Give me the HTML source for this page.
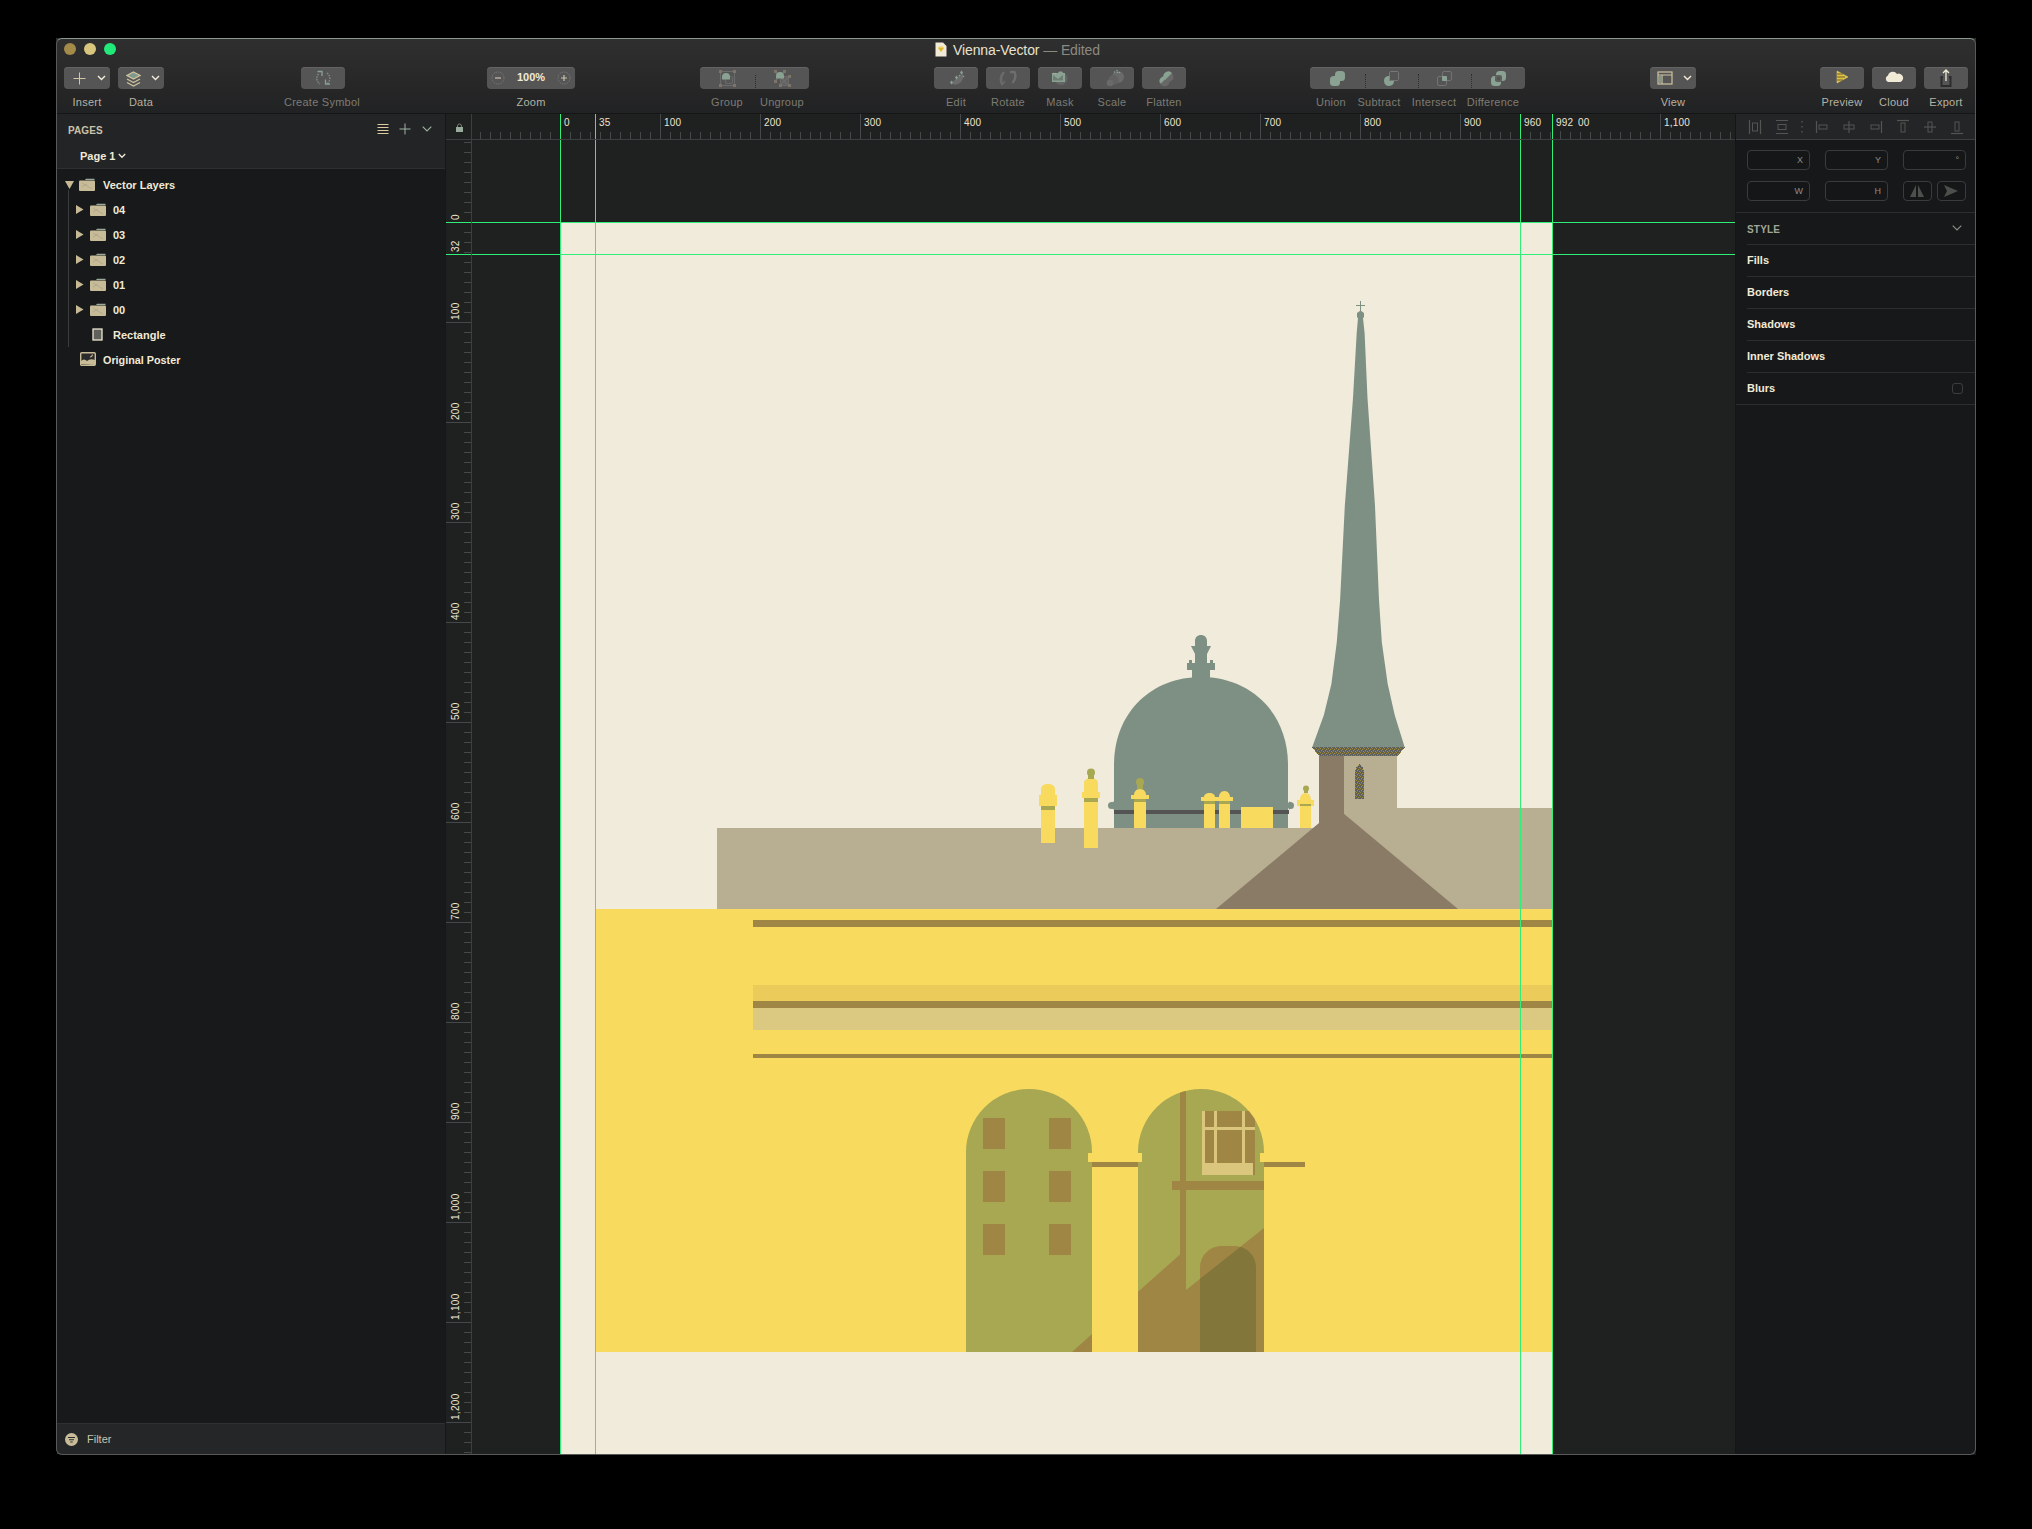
<!DOCTYPE html>
<html><head><meta charset="utf-8">
<style>
*{margin:0;padding:0;box-sizing:border-box}
html,body{width:2032px;height:1529px;overflow:hidden;background:#000}
body{position:relative;font-family:"Liberation Sans",sans-serif;color:#f1ead7}
.a{position:absolute}
.t{position:absolute;white-space:nowrap;line-height:1}
.win{left:56px;top:38px;width:1920px;height:1417px;border-radius:6px;background:#1b1c1e;overflow:hidden}
.tb{left:56px;top:38px;width:1920px;height:76px;background:linear-gradient(#2f2f2f,#2b2b2b 35%,#262627 70%,#212223);border-bottom:1px solid #151516}
.btn{position:absolute;top:67px;height:22px;border-radius:4px;background:#555555;box-shadow:inset 0 1px 0 #636363}
.lbl{position:absolute;top:97px;font-size:11px;letter-spacing:0.25px;color:#b5b2a4;white-space:nowrap;line-height:1;transform:translateX(-50%)}
.lbl.dim{color:#7d7c74}
.lay{position:absolute;font-size:11px;font-weight:700;color:#f1ead7;white-space:nowrap;line-height:1}
.sec{position:absolute;left:1747px;font-size:11px;font-weight:700;color:#f1ead7;line-height:1}
.div{position:absolute;left:1747px;width:229px;height:1px;background:#2c2d2e}
.fld{position:absolute;height:20px;border:1px solid #3a3b3b;border-radius:4px;background:#151618}
.fl{position:absolute;right:6px;top:5px;font-size:9px;color:#8e8d85;line-height:1}
.rl{position:absolute;font-size:10px;letter-spacing:0.2px;color:#ece5d2;line-height:1;white-space:nowrap}
.vr{position:absolute;font-size:10px;letter-spacing:0.3px;color:#ece5d2;line-height:1;white-space:nowrap;transform-origin:0 0;transform:rotate(-90deg)}
</style></head><body>
<!-- window -->
<div class="a win"></div>
<div class="a tb"></div>
<!-- window border -->
<div class="a" style="left:56px;top:38px;width:1920px;height:1417px;border:1px solid #595959;border-top-color:#8c9a8c;border-radius:6px;pointer-events:none;z-index:50"></div>

<!-- traffic lights -->
<div class="a" style="left:64px;top:43px;width:12px;height:12px;border-radius:6px;background:#a38a48"></div>
<div class="a" style="left:84px;top:43px;width:12px;height:12px;border-radius:6px;background:#d8c67e"></div>
<div class="a" style="left:104px;top:43px;width:12px;height:12px;border-radius:6px;background:#22ea7a"></div>

<!-- title -->
<svg class="a" style="left:935px;top:42px" width="12" height="15" viewBox="0 0 12 15"><path d="M0.5,0.5 H8 L11.5,4 V14.5 H0.5 Z" fill="#f1ead7"/><path d="M3,6 H9 L6,10 Z" fill="#e0b830"/><path d="M3,6 L4,4.5 H8 L9,6" fill="#f0d060"/></svg>
<div class="t" style="left:953px;top:43px;font-size:14px;color:#e8e2cf;letter-spacing:-0.1px">Vienna-Vector <span style="color:#8c8a80">— Edited</span></div>

<div id="toolbar"><div class="btn" style="left:64px;width:46px;"></div>
<svg class="a" style="left:73px;top:72px" width="13" height="13" viewBox="0 0 13 13"><path d="M6.5,0.5 V12.5 M0.5,6.5 H12.5" stroke="#d3c7a0" stroke-width="1"/></svg>
<svg class="a" style="left:97px;top:75px" width="9" height="6" viewBox="0 0 9 6"><path d="M1,1 L4.5,4.5 L8,1" fill="none" stroke="#f2ecd9" stroke-width="1.4"/></svg>
<div class="lbl" style="left:87px">Insert</div>
<div class="btn" style="left:118px;width:46px;"></div>
<svg class="a" style="left:126px;top:71px" width="15" height="16" viewBox="0 0 15 16"><path d="M7.5,1 L14,4.5 L7.5,8 L1,4.5 Z" fill="#7f9a8c" stroke="#cfc3a0" stroke-width="1.2"/><path d="M1,8 L7.5,11.5 L14,8 M1,11.5 L7.5,15 L14,11.5" fill="none" stroke="#cfc3a0" stroke-width="1.2"/></svg>
<svg class="a" style="left:151px;top:75px" width="9" height="6" viewBox="0 0 9 6"><path d="M1,1 L4.5,4.5 L8,1" fill="none" stroke="#f2ecd9" stroke-width="1.4"/></svg>
<div class="lbl" style="left:141px">Data</div>
<div class="btn" style="left:301px;width:44px;"></div>
<div class="lbl dim" style="left:322px">Create Symbol</div>
<div class="btn" style="left:487px;width:88px;"></div>
<svg class="a" style="left:491px;top:71px" width="14" height="14" viewBox="0 0 14 14"><circle cx="7" cy="7" r="6" fill="none" stroke="#777" stroke-width="1" stroke-dasharray="1.5 1"/><path d="M4,7 H10" stroke="#c8c2ab" stroke-width="1.2"/></svg>
<svg class="a" style="left:557px;top:71px" width="14" height="14" viewBox="0 0 14 14"><circle cx="7" cy="7" r="6" fill="none" stroke="#777" stroke-width="1" stroke-dasharray="1.5 1"/><path d="M4,7 H10 M7,4 V10" stroke="#c8c2ab" stroke-width="1.2"/></svg>
<div class="t" style="left:517px;top:72px;font-size:11px;font-weight:700;color:#f1ead7">100%</div>
<div class="lbl" style="left:531px">Zoom</div>
<div class="btn" style="left:700px;width:109px;"></div>
<div class="a" style="left:755px;top:75px;width:1px;height:13px;border-left:1px dotted #2a2a2a"></div>
<div class="lbl dim" style="left:727px">Group</div>
<div class="lbl dim" style="left:782px">Ungroup</div>
<div class="btn" style="left:934px;width:44px;"></div>
<div class="lbl dim" style="left:956px">Edit</div>
<div class="btn" style="left:986px;width:44px;"></div>
<div class="lbl dim" style="left:1008px">Rotate</div>
<div class="btn" style="left:1038px;width:44px;"></div>
<div class="lbl dim" style="left:1060px">Mask</div>
<div class="btn" style="left:1090px;width:44px;"></div>
<div class="lbl dim" style="left:1112px">Scale</div>
<div class="btn" style="left:1142px;width:44px;"></div>
<div class="lbl dim" style="left:1164px">Flatten</div>
<div class="btn" style="left:1310px;width:215px;"></div>
<div class="a" style="left:1365px;top:74px;width:1px;height:14px;border-left:1px dotted #2e2e2e"></div>
<div class="a" style="left:1418px;top:74px;width:1px;height:14px;border-left:1px dotted #2e2e2e"></div>
<div class="a" style="left:1471px;top:74px;width:1px;height:14px;border-left:1px dotted #2e2e2e"></div>
<div class="lbl dim" style="left:1331px">Union</div>
<div class="lbl dim" style="left:1379px">Subtract</div>
<div class="lbl dim" style="left:1434px">Intersect</div>
<div class="lbl dim" style="left:1493px">Difference</div>
<div class="btn" style="left:1650px;width:46px;"></div>
<svg class="a" style="left:1657px;top:71px" width="16" height="14" viewBox="0 0 16 14"><rect x="1" y="1" width="14" height="12" fill="none" stroke="#cfc3a0" stroke-width="1.2"/><path d="M1,4 H15 M5,4 V13" stroke="#cfc3a0" stroke-width="1.2"/><rect x="2" y="5" width="3" height="7" fill="#7f9a8c"/></svg>
<svg class="a" style="left:1683px;top:75px" width="9" height="6" viewBox="0 0 9 6"><path d="M1,1 L4.5,4.5 L8,1" fill="none" stroke="#f2ecd9" stroke-width="1.4"/></svg>
<div class="lbl" style="left:1673px">View</div>
<div class="btn" style="left:1820px;width:44px;"></div>
<svg class="a" style="left:1834px;top:69px" width="16" height="16" viewBox="0 0 16 16"><path d="M3,2 L14,8 L3,14 Z" fill="#e0c040" stroke="#f0d860" stroke-width="0.5"/><path d="M3,5 H9 M3,8 H11 M3,11 H9" stroke="#6a6030" stroke-width="1"/></svg>
<div class="lbl" style="left:1842px">Preview</div>
<div class="btn" style="left:1872px;width:44px;"></div>
<svg class="a" style="left:1884px;top:71px" width="20" height="12" viewBox="0 0 20 12"><path d="M4,11 A3.5,3.5 0 0 1 4,4.5 A5,5 0 0 1 13,3 A4,4 0 0 1 16.5,11 Z" fill="#f1ead7"/></svg>
<div class="lbl" style="left:1894px">Cloud</div>
<div class="btn" style="left:1924px;width:44px;"></div>
<svg class="a" style="left:1938px;top:68px" width="16" height="20" viewBox="0 0 16 20"><path d="M5,9 H3.5 V18 H12.5 V9 H11" fill="none" stroke="#2c2c2c" stroke-width="2"/><path d="M8,13 V2 M5,5 L8,2 L11,5" fill="none" stroke="#f1ead7" stroke-width="1.3"/></svg>
<div class="lbl" style="left:1946px">Export</div></div>
<svg class="a" style="left:0;top:0" width="2032" height="120" viewBox="0 0 2032 120">
<!-- create symbol -->
<path d="M318.5,74 A6.5,6.5 0 0 0 320,84" fill="none" stroke="#7d8d82" stroke-width="1.4" stroke-dasharray="1.6 1"/>
<path d="M327,73 A6.5,6.5 0 0 1 326.5,84" fill="none" stroke="#7d8d82" stroke-width="1.4" stroke-dasharray="1.6 1"/>
<path d="M317.5,71.5 H322 V76" fill="none" stroke="#8aa292" stroke-width="1.3"/>
<path d="M330,84 H325.5 V79.5" fill="none" stroke="#8aa292" stroke-width="1.3"/>
<!-- group -->
<rect x="720.5" y="71.5" width="14" height="14" fill="none" stroke="#6c6c6c" stroke-width="1"/>
<g fill="#7c7468"><rect x="719" y="70" width="3" height="3"/><rect x="733" y="70" width="3" height="3"/><rect x="719" y="84" width="3" height="3"/><rect x="733" y="84" width="3" height="3"/></g>
<rect x="725.5" y="76.5" width="7" height="7" rx="2" fill="none" stroke="#686868" stroke-width="1.2"/>
<path d="M722,80 V77 A4,4 0 0 1 730,77 V80 L729,79 L728,80 L727,79 L726,80 L725,79 L724,80 L723,79 Z" fill="#8aa292"/>
<!-- ungroup -->
<rect x="780.5" y="76.5" width="8" height="9" rx="2.5" fill="#616161" stroke="#6c6c6c"/>
<path d="M775.5,72 L789,86 M784,72 L775,81 M789,76.5 L780,85.5" stroke="#6c6c6c" stroke-width="1.6"/>
<path d="M776,79 V76 A4,4 0 0 1 784,76 V79 L783,78 L782,79 L781,78 L780,79 L779,78 L778,79 L777,78 Z" fill="#8aa292"/>
<g fill="#7c7468"><rect x="774" y="70" width="3" height="3"/><rect x="783" y="70" width="3" height="3"/><rect x="774" y="80" width="3" height="3"/><rect x="788" y="75" width="3" height="3"/><rect x="779" y="84" width="3" height="3"/><rect x="788" y="84" width="3" height="3"/></g>
<!-- edit -->
<path d="M951,83 Q956,87 961,82 Q965,77 962.5,73 Z" fill="#6c6c6c"/>
<g fill="#8aa292"><path d="M951.5,80.5 L953,82.5 L951.5,84.5 L950,82.5Z"/><path d="M956.5,75.5 L958,77.5 L956.5,79.5 L955,77.5Z"/><path d="M961.5,70.5 L963,72.5 L961.5,74.5 L960,72.5Z"/><circle cx="959.5" cy="75.5" r="0.8"/><circle cx="963.5" cy="76.5" r="0.8"/></g>
<!-- rotate -->
<path d="M1004,72 Q999,78 1002,84" fill="none" stroke="#6a6a6a" stroke-width="2.6"/>
<path d="M1002,85 L1001,81 M1002,85 L1005,81" stroke="#6a6a6a" stroke-width="1.3"/>
<path d="M1010,72 H1014.5 Q1017,78 1012.5,83" fill="none" stroke="#6e6e6e" stroke-width="2.4"/>
<!-- mask -->
<circle cx="1061" cy="78.5" r="6.5" fill="#656565"/>
<path d="M1052,73 H1058 L1059,71.5 H1062 L1063,73 H1065 V82 H1052 Z" fill="#8aa292"/>
<path d="M1053,75 L1058,79 L1063,75 V80.5 H1053 Z" fill="#6f7d73"/>
<circle cx="1053.5" cy="73.5" r="0.7" fill="#c8a880"/><circle cx="1055.5" cy="73.5" r="0.7" fill="#c8a880"/>
<!-- scale -->
<circle cx="1118" cy="77" r="6" fill="#6a6a6a"/>
<circle cx="1113.5" cy="80" r="5" fill="#626262"/>
<circle cx="1110" cy="83" r="3.3" fill="#6a6a6a"/>
<g fill="#8aa292"><circle cx="1114.5" cy="72" r="0.8"/><circle cx="1117" cy="70.5" r="0.8"/><circle cx="1117.5" cy="72.5" r="0.8"/><circle cx="1119.5" cy="72.5" r="0.8"/></g>
<!-- flatten -->
<circle cx="1164.5" cy="81.5" r="5" fill="#686868"/>
<circle cx="1168.5" cy="77" r="5" fill="#686868"/>
<path d="M1159.5,82 A5,5 0 0 1 1167,77 L1161,83.5 Z" fill="#8aa292"/>
<path d="M1163.5,77.5 A5,5 0 0 1 1172,73 L1165,80 Z" fill="#8aa292"/>
<path d="M1160.5,83 L1169,74.5" stroke="#8a9a8e" stroke-width="1" stroke-dasharray="1 1.2"/>
<!-- union -->
<g fill="#8aa292"><rect x="1330" y="76" width="10" height="10" rx="3.5"/><rect x="1335" y="71" width="10" height="10" rx="3.5"/></g>
<!-- subtract -->
<rect x="1389.5" y="71.5" width="9" height="9" rx="1" fill="none" stroke="#777" stroke-width="1"/>
<path d="M1388,76 A5,5 0 1 0 1394,81.5 L1394,81 L1389.5,81 L1389.5,76 Z" fill="#8aa292"/>
<!-- intersect -->
<rect x="1437.5" y="76.5" width="9" height="9" rx="1.5" fill="none" stroke="#737373" stroke-width="1"/>
<rect x="1442.5" y="71.5" width="9" height="9" rx="1.5" fill="none" stroke="#737373" stroke-width="1"/>
<rect x="1442" y="76" width="5" height="5" rx="1" fill="#8aa292"/>
<!-- difference -->
<g fill="#8aa292"><rect x="1491" y="76" width="10" height="10" rx="3.5"/><rect x="1496" y="71" width="10" height="10" rx="3.5"/></g>
<rect x="1495" y="75" width="7" height="7" rx="2" fill="#5f5f5f"/>
<rect x="1497" y="77" width="3" height="3" fill="#545454"/>
</svg>
<div id="left"><div class="a" style="left:57px;top:114px;width:388px;height:54px;background:#232426"></div>
<div class="a" style="left:57px;top:168px;width:388px;height:1px;background:#2e2f31"></div>
<div class="a" style="left:57px;top:169px;width:388px;height:1254px;background:#18191b"></div>
<div class="a" style="left:57px;top:1423px;width:388px;height:31px;background:#252627;border-top:1px solid #2f3031"></div>
<div class="a" style="left:445px;top:114px;width:1px;height:1341px;background:#161718"></div>
<div class="t" style="left:68px;top:125.5px;font-size:10px;font-weight:700;color:#c9c2a9;letter-spacing:0.1px">PAGES</div>
<svg class="a" style="left:377px;top:123px" width="12" height="12" viewBox="0 0 12 12"><path d="M0.5,1.5 H11.5 M0.5,4.5 H11.5 M0.5,7.5 H11.5 M0.5,10.5 H11.5" stroke="#dccca0" stroke-width="1"/></svg>
<svg class="a" style="left:399px;top:123px" width="12" height="12" viewBox="0 0 12 12"><path d="M6,0.5 V11.5 M0.5,6 H11.5" stroke="#9fb3a3" stroke-width="1"/></svg>
<svg class="a" style="left:422px;top:126px" width="10" height="7" viewBox="0 0 10 7"><path d="M0.7,0.7 L5,5 L9.3,0.7" fill="none" stroke="#9fb3a3" stroke-width="1.1"/></svg>
<div class="t" style="left:80px;top:151px;font-size:11px;font-weight:700;color:#f1ead7">Page 1</div>
<svg class="a" style="left:118px;top:153px" width="8" height="6" viewBox="0 0 8 6"><path d="M0.8,1 L4,4.3 L7.2,1" fill="none" stroke="#f1ead7" stroke-width="1.3"/></svg>
<svg class="a" style="left:65px;top:181px" width="9" height="8" viewBox="0 0 9 8"><path d="M0,0 H9 L4.5,8Z" fill="#c6b994"/></svg>
<svg class="a" style="left:79px;top:178px" width="16" height="13" viewBox="0 0 16 13"><path d="M0.5,2 H6 L7,0.8 H15.5 V2 Z" fill="#9aab9d"/><rect x="0" y="2.5" width="16" height="10.5" rx="1" fill="#c8bc98"/><path d="M3,5 L13,11 M3,9 L8,6" stroke="#a9a48a" stroke-width="0.8"/></svg>
<div class="lay" style="left:103px;top:180px">Vector Layers</div>
<div class="a" style="left:68px;top:190px;width:1px;height:157px;background:#3b3c3c"></div>
<svg class="a" style="left:76px;top:205px" width="8" height="9" viewBox="0 0 8 9"><path d="M0,0 L7.5,4.5 L0,9Z" fill="#c6b994"/></svg>
<svg class="a" style="left:90px;top:203px" width="16" height="13" viewBox="0 0 16 13"><path d="M0.5,2 H6 L7,0.8 H15.5 V2 Z" fill="#9aab9d"/><rect x="0" y="2.5" width="16" height="10.5" rx="1" fill="#c8bc98"/><path d="M3,5 L13,11 M3,9 L8,6" stroke="#a9a48a" stroke-width="0.8"/></svg>
<div class="lay" style="left:113px;top:205px">04</div>
<svg class="a" style="left:76px;top:230px" width="8" height="9" viewBox="0 0 8 9"><path d="M0,0 L7.5,4.5 L0,9Z" fill="#c6b994"/></svg>
<svg class="a" style="left:90px;top:228px" width="16" height="13" viewBox="0 0 16 13"><path d="M0.5,2 H6 L7,0.8 H15.5 V2 Z" fill="#9aab9d"/><rect x="0" y="2.5" width="16" height="10.5" rx="1" fill="#c8bc98"/><path d="M3,5 L13,11 M3,9 L8,6" stroke="#a9a48a" stroke-width="0.8"/></svg>
<div class="lay" style="left:113px;top:230px">03</div>
<svg class="a" style="left:76px;top:255px" width="8" height="9" viewBox="0 0 8 9"><path d="M0,0 L7.5,4.5 L0,9Z" fill="#c6b994"/></svg>
<svg class="a" style="left:90px;top:253px" width="16" height="13" viewBox="0 0 16 13"><path d="M0.5,2 H6 L7,0.8 H15.5 V2 Z" fill="#9aab9d"/><rect x="0" y="2.5" width="16" height="10.5" rx="1" fill="#c8bc98"/><path d="M3,5 L13,11 M3,9 L8,6" stroke="#a9a48a" stroke-width="0.8"/></svg>
<div class="lay" style="left:113px;top:255px">02</div>
<svg class="a" style="left:76px;top:280px" width="8" height="9" viewBox="0 0 8 9"><path d="M0,0 L7.5,4.5 L0,9Z" fill="#c6b994"/></svg>
<svg class="a" style="left:90px;top:278px" width="16" height="13" viewBox="0 0 16 13"><path d="M0.5,2 H6 L7,0.8 H15.5 V2 Z" fill="#9aab9d"/><rect x="0" y="2.5" width="16" height="10.5" rx="1" fill="#c8bc98"/><path d="M3,5 L13,11 M3,9 L8,6" stroke="#a9a48a" stroke-width="0.8"/></svg>
<div class="lay" style="left:113px;top:280px">01</div>
<svg class="a" style="left:76px;top:305px" width="8" height="9" viewBox="0 0 8 9"><path d="M0,0 L7.5,4.5 L0,9Z" fill="#c6b994"/></svg>
<svg class="a" style="left:90px;top:303px" width="16" height="13" viewBox="0 0 16 13"><path d="M0.5,2 H6 L7,0.8 H15.5 V2 Z" fill="#9aab9d"/><rect x="0" y="2.5" width="16" height="10.5" rx="1" fill="#c8bc98"/><path d="M3,5 L13,11 M3,9 L8,6" stroke="#a9a48a" stroke-width="0.8"/></svg>
<div class="lay" style="left:113px;top:305px">00</div>
<svg class="a" style="left:92px;top:328px" width="11" height="13" viewBox="0 0 11 13"><rect x="1" y="1" width="9" height="11" fill="#5f615a" stroke="#ede6d0" stroke-width="1.3"/></svg>
<div class="lay" style="left:113px;top:330px">Rectangle</div>
<svg class="a" style="left:80px;top:352px" width="16" height="14" viewBox="0 0 16 14"><rect x="0.7" y="0.7" width="14.6" height="12.6" rx="1" fill="#2a2b2a" stroke="#c8bc98" stroke-width="1.4"/><path d="M1,12 L1,9 Q4,6 7,9 Q10,6 15,8 L15,13 Z" fill="#c8bc98"/><path d="M10,5 Q12,5 12.5,2.5" stroke="#c8bc98" fill="none" stroke-width="1.2"/></svg>
<div class="lay" style="left:103px;top:355px;font-size:10.8px">Original Poster</div>
<svg class="a" style="left:65px;top:1433px" width="13" height="13" viewBox="0 0 13 13"><circle cx="6.5" cy="6.5" r="6.5" fill="#c8bc98"/><path d="M3,4.5 H10 M4,6.8 H9 M5.3,9 H7.7" stroke="#2a2a2a" stroke-width="1.1"/></svg>
<div class="t" style="left:87px;top:1434px;font-size:11px;color:#c9c3ae">Filter</div></div>
<div id="canvas">
<svg class="a" style="left:471px;top:139px" width="1265" height="1316" viewBox="471 139 1265 1316" shape-rendering="crispEdges">
<rect x="471" y="139" width="1265" height="1316" fill="#1f2020"/>
<rect x="560" y="222" width="992" height="1240" fill="#f1ebdb"/>
<g shape-rendering="geometricPrecision">
<!-- spire -->
<path fill="#7e9083" d="M1358,318 L1356.7,333 L1353,398 L1344.8,506 L1340.1,600 L1336.8,642 L1331.4,684 L1323.9,715 L1312.3,747 L1404.6,747 L1394.7,715 L1387.7,684 L1381.8,642 L1379,600 L1375,506 L1367.5,398 L1364.6,333 L1363,318 Z"/>
<path fill="#7e9083" d="M1357,313 L1360.5,310.5 L1364,313 L1364,317 L1362.5,319 L1358.5,319 L1357,317 Z"/>
<rect x="1360" y="301" width="1" height="11" fill="#7e9083"/>
<rect x="1356" y="305" width="9" height="1" fill="#7e9083"/>
<!-- dome -->
<path fill="#7e9083" d="M1114,828 L1114,765 C1114,712 1152,677 1201,677 C1250,677 1288,712 1288,765 L1288,828 Z"/>
<path fill="#7e9083" d="M1110,805.5 L1114,801 L1114,810 Z M1293,805.5 L1289,801 L1289,810 Z"/>
<circle cx="1111.5" cy="805.5" r="3.5" fill="#7e9083"/>
<circle cx="1290.5" cy="805.5" r="3.5" fill="#7e9083"/>
<!-- finial -->
<path fill="#7e9083" d="M1192,678 L1192,670 L1187,670 L1187,663 L1189,663 L1189,660 L1192,660 L1192,663 L1195,663 L1195,654 L1191,646 L1195,646 L1195,641 C1195,637 1198,635 1201,635 C1204,635 1207,637 1207,641 L1207,646 L1211,646 L1207,654 L1207,663 L1210,663 L1210,660 L1213,660 L1213,663 L1215,663 L1215,670 L1210,670 L1210,678 Z"/>
</g>
<rect x="1114" y="810" width="175" height="4" fill="#545454"/>
<!-- roofs -->
<rect x="717" y="828" width="620" height="81" fill="#b8ae92"/>
<rect x="1337" y="808" width="215" height="101" fill="#b8ae92"/>
<path d="M1216,909 L1337,808 L1458,909 Z" fill="#8a7b66" shape-rendering="geometricPrecision"/>
<!-- yellow posts -->
<g fill="#f7da5e" shape-rendering="geometricPrecision">
<path d="M1041,843 L1041,806 L1039,806 L1039,795 L1041,795 L1041,789 C1041,786 1044,784 1048,784 C1052,784 1055,786 1055,789 L1055,795 L1057,795 L1057,806 L1055,806 L1055,843 Z"/>
<path d="M1084,848 L1084,798 L1082,798 L1082,792 L1084,792 L1084,783 C1084,780 1087,778 1091,778 C1095,778 1098,780 1098,783 L1098,792 L1100,792 L1100,798 L1098,798 L1098,848 Z"/>
<path d="M1134,828 L1134,799 L1131,799 L1131,795 L1134,795 C1134,792 1136,789 1140,789 C1144,789 1146,792 1146,795 L1149,795 L1149,799 L1146,799 L1146,828 Z"/>
<path d="M1204,828 L1204,801 L1201,801 L1201,797 L1204,797 C1204,795 1206,793 1209.5,793 C1213,793 1215,795 1215,797 L1219,797 C1219,794 1221,791 1224.5,791 C1228,791 1230,794 1230,797 L1233,797 L1233,801 L1230,801 L1230,828 L1219,828 L1219,801 L1215,801 L1215,828 Z"/>
<rect x="1241" y="807" width="32" height="21"/>
<path d="M1300,828 L1300,806 L1297,806 L1297,800 L1300,800 C1300,796 1302,793 1305.5,793 C1309,793 1311,796 1311,800 L1314,800 L1314,806 L1311,806 L1311,828 Z"/>
</g>
<g fill="#a8a853">
<rect x="1041" y="806" width="14" height="4"/>
<rect x="1084" y="798" width="14" height="4"/>
<rect x="1134" y="799" width="12" height="3"/>
<rect x="1204" y="801" width="11" height="3"/>
<rect x="1219" y="801" width="11" height="3"/>
<rect x="1300" y="804" width="11" height="2"/>
<rect x="1088" y="772" width="6" height="7"/>
<rect x="1137" y="782" width="6" height="7"/>
<rect x="1304" y="788" width="4" height="5"/>
<circle cx="1091" cy="772.5" r="4" shape-rendering="geometricPrecision"/>
<circle cx="1140" cy="782" r="4" shape-rendering="geometricPrecision"/>
<circle cx="1306" cy="788.5" r="3" shape-rendering="geometricPrecision"/>
</g>
<!-- tower -->
<rect x="1319" y="756" width="25" height="70" fill="#8a7b66"/>
<rect x="1344" y="756" width="53" height="53" fill="#b8ae92"/>
<defs><pattern id="dith" x="0" y="0" width="4" height="4" patternUnits="userSpaceOnUse"><rect width="4" height="4" fill="#5c5e5b"/><rect x="0" y="0" width="1" height="1" fill="#a48c34"/><rect x="2" y="1" width="1" height="1" fill="#a48c34"/><rect x="1" y="2" width="1" height="1" fill="#a48c34"/><rect x="3" y="3" width="1" height="1" fill="#a48c34"/><rect x="3" y="1" width="1" height="1" fill="#6a6c68"/><rect x="1" y="3" width="1" height="1" fill="#6a6c68"/></pattern></defs><path d="M1312,747 L1405,747 L1398,756 L1319,756 Z" fill="url(#dith)"/>
<path d="M1355,799 L1355,773 Q1355,767 1359.5,764 Q1364,767 1364,773 L1364,799 Z" fill="url(#dith)"/>
<!-- yellow building -->
<rect x="595" y="909" width="957" height="443" fill="#f7da5e"/>
<rect x="753" y="920" width="799" height="7" fill="#a08644"/>
<rect x="753" y="985" width="799" height="16" fill="#ebcb5a"/>
<rect x="753" y="1001" width="799" height="7" fill="#a08644"/>
<rect x="753" y="1008" width="799" height="22" fill="#dbc881"/>
<rect x="753" y="1054" width="799" height="4" fill="#a08644"/>
<!-- bars between arches -->
<rect x="1092" y="1162" width="46" height="5" fill="#a08644"/>
<rect x="1264" y="1162" width="41" height="5" fill="#a08644"/>
<!-- left arch -->
<defs>
<clipPath id="archL"><path d="M966,1352 L966,1152 A63,63 0 0 1 1092,1152 L1092,1153 L1088,1153 L1088,1162 L1092,1162 L1092,1352 Z"/></clipPath>
<clipPath id="archR"><path d="M1138,1352 L1138,1162 L1142,1162 L1142,1153 L1138,1153 L1138,1152 A63,63 0 0 1 1264,1152 L1264,1153 L1260,1153 L1260,1162 L1264,1162 L1264,1352 Z"/></clipPath>
<clipPath id="door"><path d="M1200,1352 L1200,1268 C1200,1255 1210,1246 1222,1246 L1234,1246 C1246,1246 1256,1255 1256,1268 L1256,1352 Z"/></clipPath>
</defs>
<g clip-path="url(#archL)">
<rect x="960" y="1080" width="140" height="280" fill="#a8a853"/>
<g fill="#a08644">
<rect x="983" y="1118" width="22" height="31"/><rect x="1049" y="1118" width="22" height="31"/>
<rect x="983" y="1171" width="22" height="31"/><rect x="1049" y="1171" width="22" height="31"/>
<rect x="983" y="1224" width="22" height="31"/><rect x="1049" y="1224" width="22" height="31"/>
</g>
<path d="M1072,1352 L1092,1334 L1092,1352 Z" fill="#a08644" shape-rendering="geometricPrecision"/>
</g>
<g clip-path="url(#archR)">
<rect x="1130" y="1080" width="140" height="280" fill="#a8a853"/>
<rect x="1180" y="1080" width="6" height="220" fill="#a08644"/>
<rect x="1172" y="1181" width="92" height="9" fill="#a08644"/>
<rect x="1202" y="1111" width="53" height="64" fill="#dbc67e"/>
<rect x="1205" y="1111" width="50" height="52" fill="#a08644"/>
<rect x="1253" y="1163" width="2" height="12" fill="#a08644"/>
<rect x="1214" y="1111" width="3" height="52" fill="#dbc67e"/>
<rect x="1242" y="1111" width="3" height="52" fill="#dbc67e"/>
<rect x="1205" y="1127" width="50" height="3" fill="#dbc67e"/>
<rect x="1200" y="1240" width="56" height="120" fill="#a08644" clip-path="url(#door)"/>
<path id="shad" d="M1130,1298.8 L1180,1254.5 L1180,1290 L1186,1290 L1264,1228 L1264,1360 L1130,1360 Z" fill="#a08644" shape-rendering="geometricPrecision"/>
<g clip-path="url(#door)"><path d="M1130,1298.8 L1180,1254.5 L1180,1290 L1186,1290 L1264,1228 L1264,1360 L1130,1360 Z" fill="#83763b" shape-rendering="geometricPrecision"/></g>
</g>
<!-- guides -->
<g fill="#30ee78">
<rect x="560" y="139" width="1" height="1316"/>
<rect x="595" y="139" width="1" height="1316"/>
<rect x="1520" y="139" width="1" height="1316"/>
<rect x="1552" y="139" width="1" height="1316"/>
<rect x="471" y="222" width="1265" height="1"/>
<rect x="471" y="254" width="1265" height="1"/>
</g>
</svg>
</div>
<div id="rulers"><div class="a" style="left:446px;top:114px;width:1290px;height:25px;background:#1f2020"></div>
<div class="a" style="left:446px;top:139px;width:25px;height:1316px;background:#1f2020"></div>
<div class="a" style="left:446px;top:139px;width:1290px;height:1px;background:#3b3f41"></div>
<div class="a" style="left:471px;top:114px;width:1px;height:1341px;background:#3b3f41"></div>
<svg class="a" style="left:456px;top:123px" width="7" height="9" viewBox="0 0 7 9"><path d="M1.5,4.2 V3 A2,2 0 0 1 5.5,3 V4.2" fill="none" stroke="#7b7d7a" stroke-width="1"/><rect x="0" y="4" width="7" height="5" fill="#98ab9c"/></svg>
<svg class="a" style="left:0;top:0" width="2032" height="1529" viewBox="0 0 2032 1529" shape-rendering="crispEdges"><g fill="#44484a"><rect x="480" y="132" width="1" height="7"/><rect x="490" y="132" width="1" height="7"/><rect x="500" y="132" width="1" height="7"/><rect x="510" y="132" width="1" height="7"/><rect x="520" y="132" width="1" height="7"/><rect x="530" y="132" width="1" height="7"/><rect x="540" y="132" width="1" height="7"/><rect x="550" y="132" width="1" height="7"/><rect x="560" y="114" width="1" height="25"/><rect x="570" y="132" width="1" height="7"/><rect x="580" y="132" width="1" height="7"/><rect x="590" y="132" width="1" height="7"/><rect x="600" y="132" width="1" height="7"/><rect x="610" y="132" width="1" height="7"/><rect x="620" y="132" width="1" height="7"/><rect x="630" y="132" width="1" height="7"/><rect x="640" y="132" width="1" height="7"/><rect x="650" y="132" width="1" height="7"/><rect x="660" y="114" width="1" height="25"/><rect x="670" y="132" width="1" height="7"/><rect x="680" y="132" width="1" height="7"/><rect x="690" y="132" width="1" height="7"/><rect x="700" y="132" width="1" height="7"/><rect x="710" y="132" width="1" height="7"/><rect x="720" y="132" width="1" height="7"/><rect x="730" y="132" width="1" height="7"/><rect x="740" y="132" width="1" height="7"/><rect x="750" y="132" width="1" height="7"/><rect x="760" y="114" width="1" height="25"/><rect x="770" y="132" width="1" height="7"/><rect x="780" y="132" width="1" height="7"/><rect x="790" y="132" width="1" height="7"/><rect x="800" y="132" width="1" height="7"/><rect x="810" y="132" width="1" height="7"/><rect x="820" y="132" width="1" height="7"/><rect x="830" y="132" width="1" height="7"/><rect x="840" y="132" width="1" height="7"/><rect x="850" y="132" width="1" height="7"/><rect x="860" y="114" width="1" height="25"/><rect x="870" y="132" width="1" height="7"/><rect x="880" y="132" width="1" height="7"/><rect x="890" y="132" width="1" height="7"/><rect x="900" y="132" width="1" height="7"/><rect x="910" y="132" width="1" height="7"/><rect x="920" y="132" width="1" height="7"/><rect x="930" y="132" width="1" height="7"/><rect x="940" y="132" width="1" height="7"/><rect x="950" y="132" width="1" height="7"/><rect x="960" y="114" width="1" height="25"/><rect x="970" y="132" width="1" height="7"/><rect x="980" y="132" width="1" height="7"/><rect x="990" y="132" width="1" height="7"/><rect x="1000" y="132" width="1" height="7"/><rect x="1010" y="132" width="1" height="7"/><rect x="1020" y="132" width="1" height="7"/><rect x="1030" y="132" width="1" height="7"/><rect x="1040" y="132" width="1" height="7"/><rect x="1050" y="132" width="1" height="7"/><rect x="1060" y="114" width="1" height="25"/><rect x="1070" y="132" width="1" height="7"/><rect x="1080" y="132" width="1" height="7"/><rect x="1090" y="132" width="1" height="7"/><rect x="1100" y="132" width="1" height="7"/><rect x="1110" y="132" width="1" height="7"/><rect x="1120" y="132" width="1" height="7"/><rect x="1130" y="132" width="1" height="7"/><rect x="1140" y="132" width="1" height="7"/><rect x="1150" y="132" width="1" height="7"/><rect x="1160" y="114" width="1" height="25"/><rect x="1170" y="132" width="1" height="7"/><rect x="1180" y="132" width="1" height="7"/><rect x="1190" y="132" width="1" height="7"/><rect x="1200" y="132" width="1" height="7"/><rect x="1210" y="132" width="1" height="7"/><rect x="1220" y="132" width="1" height="7"/><rect x="1230" y="132" width="1" height="7"/><rect x="1240" y="132" width="1" height="7"/><rect x="1250" y="132" width="1" height="7"/><rect x="1260" y="114" width="1" height="25"/><rect x="1270" y="132" width="1" height="7"/><rect x="1280" y="132" width="1" height="7"/><rect x="1290" y="132" width="1" height="7"/><rect x="1300" y="132" width="1" height="7"/><rect x="1310" y="132" width="1" height="7"/><rect x="1320" y="132" width="1" height="7"/><rect x="1330" y="132" width="1" height="7"/><rect x="1340" y="132" width="1" height="7"/><rect x="1350" y="132" width="1" height="7"/><rect x="1360" y="114" width="1" height="25"/><rect x="1370" y="132" width="1" height="7"/><rect x="1380" y="132" width="1" height="7"/><rect x="1390" y="132" width="1" height="7"/><rect x="1400" y="132" width="1" height="7"/><rect x="1410" y="132" width="1" height="7"/><rect x="1420" y="132" width="1" height="7"/><rect x="1430" y="132" width="1" height="7"/><rect x="1440" y="132" width="1" height="7"/><rect x="1450" y="132" width="1" height="7"/><rect x="1460" y="114" width="1" height="25"/><rect x="1470" y="132" width="1" height="7"/><rect x="1480" y="132" width="1" height="7"/><rect x="1490" y="132" width="1" height="7"/><rect x="1500" y="132" width="1" height="7"/><rect x="1510" y="132" width="1" height="7"/><rect x="1520" y="132" width="1" height="7"/><rect x="1530" y="132" width="1" height="7"/><rect x="1540" y="132" width="1" height="7"/><rect x="1550" y="132" width="1" height="7"/><rect x="1560" y="114" width="1" height="25"/><rect x="1570" y="132" width="1" height="7"/><rect x="1580" y="132" width="1" height="7"/><rect x="1590" y="132" width="1" height="7"/><rect x="1600" y="132" width="1" height="7"/><rect x="1610" y="132" width="1" height="7"/><rect x="1620" y="132" width="1" height="7"/><rect x="1630" y="132" width="1" height="7"/><rect x="1640" y="132" width="1" height="7"/><rect x="1650" y="132" width="1" height="7"/><rect x="1660" y="114" width="1" height="25"/><rect x="1670" y="132" width="1" height="7"/><rect x="1680" y="132" width="1" height="7"/><rect x="1690" y="132" width="1" height="7"/><rect x="1700" y="132" width="1" height="7"/><rect x="1710" y="132" width="1" height="7"/><rect x="1720" y="132" width="1" height="7"/><rect x="1730" y="132" width="1" height="7"/><rect x="464" y="142" width="7" height="1"/><rect x="464" y="152" width="7" height="1"/><rect x="464" y="162" width="7" height="1"/><rect x="464" y="172" width="7" height="1"/><rect x="464" y="182" width="7" height="1"/><rect x="464" y="192" width="7" height="1"/><rect x="464" y="202" width="7" height="1"/><rect x="464" y="212" width="7" height="1"/><rect x="446" y="222" width="25" height="1"/><rect x="464" y="232" width="7" height="1"/><rect x="464" y="242" width="7" height="1"/><rect x="464" y="252" width="7" height="1"/><rect x="464" y="262" width="7" height="1"/><rect x="464" y="272" width="7" height="1"/><rect x="464" y="282" width="7" height="1"/><rect x="464" y="292" width="7" height="1"/><rect x="464" y="302" width="7" height="1"/><rect x="464" y="312" width="7" height="1"/><rect x="446" y="322" width="25" height="1"/><rect x="464" y="332" width="7" height="1"/><rect x="464" y="342" width="7" height="1"/><rect x="464" y="352" width="7" height="1"/><rect x="464" y="362" width="7" height="1"/><rect x="464" y="372" width="7" height="1"/><rect x="464" y="382" width="7" height="1"/><rect x="464" y="392" width="7" height="1"/><rect x="464" y="402" width="7" height="1"/><rect x="464" y="412" width="7" height="1"/><rect x="446" y="422" width="25" height="1"/><rect x="464" y="432" width="7" height="1"/><rect x="464" y="442" width="7" height="1"/><rect x="464" y="452" width="7" height="1"/><rect x="464" y="462" width="7" height="1"/><rect x="464" y="472" width="7" height="1"/><rect x="464" y="482" width="7" height="1"/><rect x="464" y="492" width="7" height="1"/><rect x="464" y="502" width="7" height="1"/><rect x="464" y="512" width="7" height="1"/><rect x="446" y="522" width="25" height="1"/><rect x="464" y="532" width="7" height="1"/><rect x="464" y="542" width="7" height="1"/><rect x="464" y="552" width="7" height="1"/><rect x="464" y="562" width="7" height="1"/><rect x="464" y="572" width="7" height="1"/><rect x="464" y="582" width="7" height="1"/><rect x="464" y="592" width="7" height="1"/><rect x="464" y="602" width="7" height="1"/><rect x="464" y="612" width="7" height="1"/><rect x="446" y="622" width="25" height="1"/><rect x="464" y="632" width="7" height="1"/><rect x="464" y="642" width="7" height="1"/><rect x="464" y="652" width="7" height="1"/><rect x="464" y="662" width="7" height="1"/><rect x="464" y="672" width="7" height="1"/><rect x="464" y="682" width="7" height="1"/><rect x="464" y="692" width="7" height="1"/><rect x="464" y="702" width="7" height="1"/><rect x="464" y="712" width="7" height="1"/><rect x="446" y="722" width="25" height="1"/><rect x="464" y="732" width="7" height="1"/><rect x="464" y="742" width="7" height="1"/><rect x="464" y="752" width="7" height="1"/><rect x="464" y="762" width="7" height="1"/><rect x="464" y="772" width="7" height="1"/><rect x="464" y="782" width="7" height="1"/><rect x="464" y="792" width="7" height="1"/><rect x="464" y="802" width="7" height="1"/><rect x="464" y="812" width="7" height="1"/><rect x="446" y="822" width="25" height="1"/><rect x="464" y="832" width="7" height="1"/><rect x="464" y="842" width="7" height="1"/><rect x="464" y="852" width="7" height="1"/><rect x="464" y="862" width="7" height="1"/><rect x="464" y="872" width="7" height="1"/><rect x="464" y="882" width="7" height="1"/><rect x="464" y="892" width="7" height="1"/><rect x="464" y="902" width="7" height="1"/><rect x="464" y="912" width="7" height="1"/><rect x="446" y="922" width="25" height="1"/><rect x="464" y="932" width="7" height="1"/><rect x="464" y="942" width="7" height="1"/><rect x="464" y="952" width="7" height="1"/><rect x="464" y="962" width="7" height="1"/><rect x="464" y="972" width="7" height="1"/><rect x="464" y="982" width="7" height="1"/><rect x="464" y="992" width="7" height="1"/><rect x="464" y="1002" width="7" height="1"/><rect x="464" y="1012" width="7" height="1"/><rect x="446" y="1022" width="25" height="1"/><rect x="464" y="1032" width="7" height="1"/><rect x="464" y="1042" width="7" height="1"/><rect x="464" y="1052" width="7" height="1"/><rect x="464" y="1062" width="7" height="1"/><rect x="464" y="1072" width="7" height="1"/><rect x="464" y="1082" width="7" height="1"/><rect x="464" y="1092" width="7" height="1"/><rect x="464" y="1102" width="7" height="1"/><rect x="464" y="1112" width="7" height="1"/><rect x="446" y="1122" width="25" height="1"/><rect x="464" y="1132" width="7" height="1"/><rect x="464" y="1142" width="7" height="1"/><rect x="464" y="1152" width="7" height="1"/><rect x="464" y="1162" width="7" height="1"/><rect x="464" y="1172" width="7" height="1"/><rect x="464" y="1182" width="7" height="1"/><rect x="464" y="1192" width="7" height="1"/><rect x="464" y="1202" width="7" height="1"/><rect x="464" y="1212" width="7" height="1"/><rect x="446" y="1222" width="25" height="1"/><rect x="464" y="1232" width="7" height="1"/><rect x="464" y="1242" width="7" height="1"/><rect x="464" y="1252" width="7" height="1"/><rect x="464" y="1262" width="7" height="1"/><rect x="464" y="1272" width="7" height="1"/><rect x="464" y="1282" width="7" height="1"/><rect x="464" y="1292" width="7" height="1"/><rect x="464" y="1302" width="7" height="1"/><rect x="464" y="1312" width="7" height="1"/><rect x="446" y="1322" width="25" height="1"/><rect x="464" y="1332" width="7" height="1"/><rect x="464" y="1342" width="7" height="1"/><rect x="464" y="1352" width="7" height="1"/><rect x="464" y="1362" width="7" height="1"/><rect x="464" y="1372" width="7" height="1"/><rect x="464" y="1382" width="7" height="1"/><rect x="464" y="1392" width="7" height="1"/><rect x="464" y="1402" width="7" height="1"/><rect x="464" y="1412" width="7" height="1"/><rect x="446" y="1422" width="25" height="1"/><rect x="464" y="1432" width="7" height="1"/><rect x="464" y="1442" width="7" height="1"/><rect x="464" y="1452" width="7" height="1"/></g></svg>
<svg class="a" style="left:0;top:0" width="2032" height="1529" viewBox="0 0 2032 1529" shape-rendering="crispEdges"><g fill="#30ee78"><rect x="560" y="114" width="1" height="25"/><rect x="595" y="114" width="1" height="25"/><rect x="1520" y="114" width="1" height="25"/><rect x="1552" y="114" width="1" height="25"/><rect x="446" y="222" width="25" height="1"/><rect x="446" y="254" width="25" height="1"/></g></svg>
<div class="rl" style="top:118px;left:564px">0</div>
<div class="rl" style="top:118px;left:599px">35</div>
<div class="rl" style="top:118px;left:664px">100</div>
<div class="rl" style="top:118px;left:764px">200</div>
<div class="rl" style="top:118px;left:864px">300</div>
<div class="rl" style="top:118px;left:964px">400</div>
<div class="rl" style="top:118px;left:1064px">500</div>
<div class="rl" style="top:118px;left:1164px">600</div>
<div class="rl" style="top:118px;left:1264px">700</div>
<div class="rl" style="top:118px;left:1364px">800</div>
<div class="rl" style="top:118px;left:1464px">900</div>
<div class="rl" style="top:118px;left:1524px">960</div>
<div class="a" style="left:1553px;top:114px;width:23px;height:17px;background:#1f2020"></div><div class="rl" style="top:118px;left:1556px">992</div>
<div class="rl" style="top:118px;left:1664px">1,100</div>
<div class="rl" style="top:118px;left:1578px">00</div>
<div class="vr" style="left:451px;top:220px">0</div>
<div class="vr" style="left:451px;top:252px">32</div>
<div class="vr" style="left:451px;top:320px">100</div>
<div class="vr" style="left:451px;top:420px">200</div>
<div class="vr" style="left:451px;top:520px">300</div>
<div class="vr" style="left:451px;top:620px">400</div>
<div class="vr" style="left:451px;top:720px">500</div>
<div class="vr" style="left:451px;top:820px">600</div>
<div class="vr" style="left:451px;top:920px">700</div>
<div class="vr" style="left:451px;top:1020px">800</div>
<div class="vr" style="left:451px;top:1120px">900</div>
<div class="vr" style="left:451px;top:1220px">1,000</div>
<div class="vr" style="left:451px;top:1320px">1,100</div>
<div class="vr" style="left:451px;top:1420px">1,200</div></div>

<div id="right"><div class="a" style="left:1735px;top:114px;width:241px;height:1341px;background:#17181a"></div>
<div class="a" style="left:1735px;top:114px;width:241px;height:26px;background:#242527;border-bottom:1px solid #3b3f41"></div>
<div class="a" style="left:1735px;top:114px;width:1px;height:1341px;background:#141517"></div>
<svg class="a" style="left:1748px;top:118px" width="14" height="18" viewBox="0 0 14 18"><path d="M1.5,2 V16 M12.5,2 V16" stroke="#535553" stroke-width="1.2"/><rect x="4.5" y="5" width="5" height="8" fill="none" stroke="#535553"/></svg>
<svg class="a" style="left:1775px;top:118px" width="14" height="18" viewBox="0 0 14 18"><path d="M1,2.5 H13 M1,15.5 H13" stroke="#535553" stroke-width="1.2"/><rect x="3" y="6.5" width="8" height="5" fill="none" stroke="#535553"/></svg>
<svg class="a" style="left:1795px;top:118px" width="14" height="18" viewBox="0 0 14 18"><path d="M7,3 V4.5 M7,8 V9.5 M7,13 V14.5" stroke="#535553" stroke-width="1.4"/></svg>
<svg class="a" style="left:1815px;top:118px" width="14" height="18" viewBox="0 0 14 18"><path d="M1.5,3 V15" stroke="#535553" stroke-width="1.2"/><rect x="4" y="7" width="8" height="4" fill="none" stroke="#535553"/></svg>
<svg class="a" style="left:1842px;top:118px" width="14" height="18" viewBox="0 0 14 18"><path d="M7,3 V15" stroke="#535553" stroke-width="1.2"/><rect x="2" y="7" width="10" height="4" fill="none" stroke="#535553"/></svg>
<svg class="a" style="left:1869px;top:118px" width="14" height="18" viewBox="0 0 14 18"><path d="M12.5,3 V15" stroke="#535553" stroke-width="1.2"/><rect x="2" y="7" width="8" height="4" fill="none" stroke="#535553"/></svg>
<svg class="a" style="left:1896px;top:118px" width="14" height="18" viewBox="0 0 14 18"><path d="M1,2.5 H13" stroke="#535553" stroke-width="1.2"/><rect x="5" y="5" width="4" height="9" fill="none" stroke="#535553"/></svg>
<svg class="a" style="left:1923px;top:118px" width="14" height="18" viewBox="0 0 14 18"><path d="M1,9 H13" stroke="#535553" stroke-width="1.2"/><rect x="5" y="4" width="4" height="10" fill="none" stroke="#535553"/></svg>
<svg class="a" style="left:1950px;top:118px" width="14" height="18" viewBox="0 0 14 18"><path d="M1,15.5 H13" stroke="#535553" stroke-width="1.2"/><rect x="5" y="4" width="4" height="9" fill="none" stroke="#535553"/></svg>
<div class="fld" style="left:1747px;top:150px;width:63px"><span class="fl">X</span></div>
<div class="fld" style="left:1825px;top:150px;width:63px"><span class="fl">Y</span></div>
<div class="fld" style="left:1903px;top:150px;width:63px"><span class="fl">°</span></div>
<div class="fld" style="left:1747px;top:181px;width:63px"><span class="fl">W</span></div>
<div class="fld" style="left:1825px;top:181px;width:63px"><span class="fl">H</span></div>
<div class="fld" style="left:1903px;top:181px;width:29px"></div>
<div class="fld" style="left:1937px;top:181px;width:29px"></div>
<svg class="a" style="left:1909px;top:185px" width="16" height="12" viewBox="0 0 16 12"><path d="M7,0 V12 H1 Z M9,0 V12 H15 Z" fill="#4e4f4d"/></svg>
<svg class="a" style="left:1943px;top:185px" width="16" height="12" viewBox="0 0 16 12"><path d="M1,0 L15,6 L1,12 L4,6 Z" fill="#4e4f4d"/></svg>
<div class="a" style="left:1736px;top:212px;width:240px;height:1px;background:#2c2d2e"></div>
<div class="t" style="left:1747px;top:224.5px;font-size:10px;font-weight:700;color:#a2a695;letter-spacing:0.2px">STYLE</div>
<svg class="a" style="left:1952px;top:225px" width="10" height="6" viewBox="0 0 10 6"><path d="M0.7,0.7 L5,5 L9.3,0.7" fill="none" stroke="#8d9088" stroke-width="1.1"/></svg>
<div class="div" style="top:244px"></div>
<div class="sec" style="top:255px">Fills</div>
<div class="div" style="top:276px"></div>
<div class="sec" style="top:287px">Borders</div>
<div class="div" style="top:308px"></div>
<div class="sec" style="top:319px">Shadows</div>
<div class="div" style="top:340px"></div>
<div class="sec" style="top:351px">Inner Shadows</div>
<div class="div" style="top:372px"></div>
<div class="sec" style="top:383px">Blurs</div>
<div class="a" style="left:1736px;top:404px;width:240px;height:1px;background:#2c2d2e"></div>
<div class="a" style="left:1952px;top:383px;width:11px;height:11px;border:1px solid #3c3d3d;border-radius:3px"></div></div>
</body></html>
